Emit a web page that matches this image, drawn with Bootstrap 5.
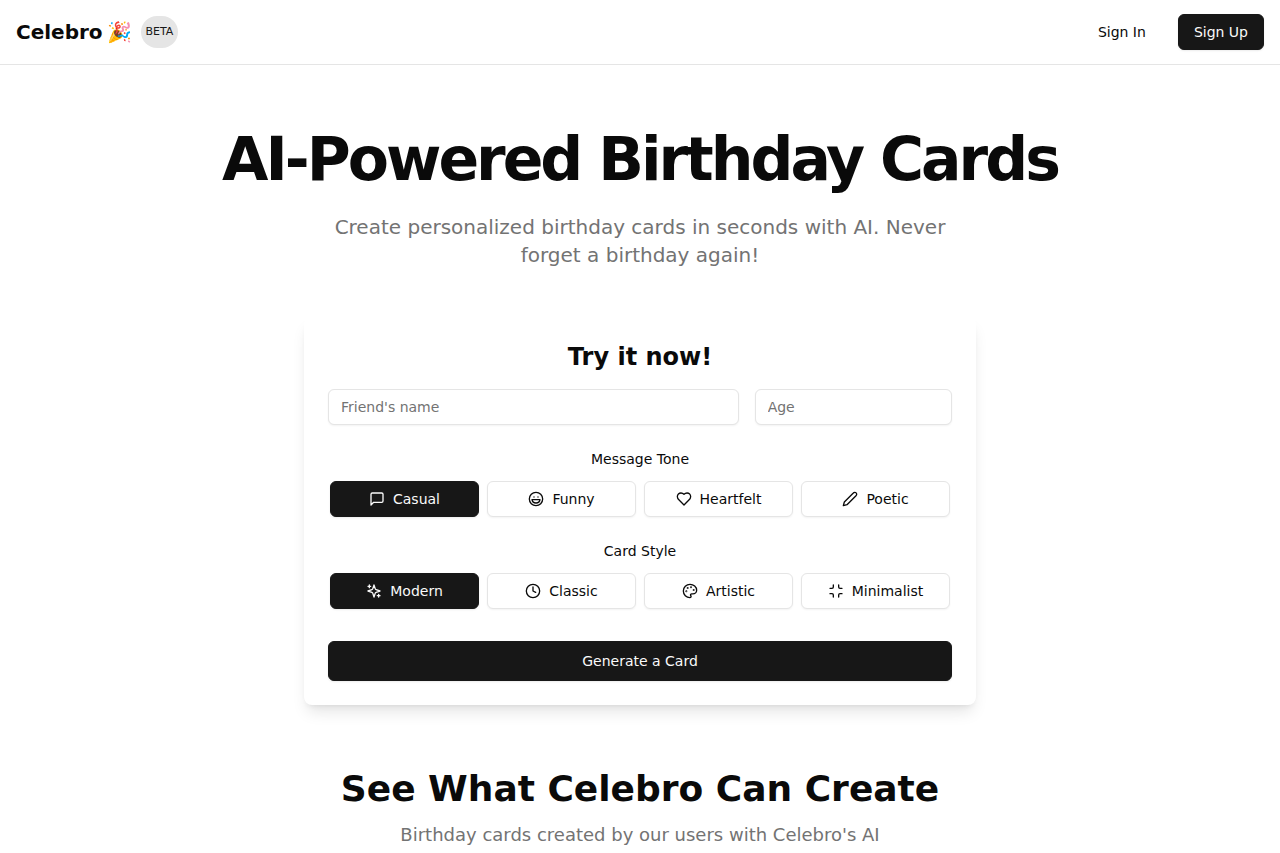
<!DOCTYPE html>
<html lang="en">
<head>
<meta charset="utf-8">
<meta name="viewport" content="width=device-width, initial-scale=1">
<title>Celebro – AI-Powered Birthday Cards</title>
<link href="https://cdn.jsdelivr.net/npm/bootstrap@5.3.0/dist/css/bootstrap.min.css" rel="stylesheet">
<style>
  :root { --ink: #0a0a0a; --solid: #171717; --line: #e5e5e5; --soft: #737373; }
  body { font-family: "DejaVu Sans", "Noto Color Emoji", sans-serif; font-size: 14px; line-height: 20px; color: var(--ink); background: #fff; }
  .site-header { min-height: 65px; border-bottom: 1px solid var(--line); }
  .brand-link { gap: 5px; font-size: 20px; line-height: 28px; font-weight: 700; color: var(--ink); text-decoration: none; }
  .beta-pill { font-size: 11px; line-height: 16px; padding: 8px 5px; border-radius: 16px; background: var(--line); color: var(--solid); }
  .btn { --bs-btn-font-size: 14px; --bs-btn-line-height: 20px; --bs-btn-padding-x: 15px; --bs-btn-padding-y: 7px; --bs-btn-border-radius: 6px; --bs-btn-color: var(--ink); --bs-btn-hover-color: var(--ink); --bs-btn-hover-bg: #f5f5f5; }
  .btn-solid { --bs-btn-color: #fafafa; --bs-btn-bg: var(--solid); --bs-btn-border-color: var(--solid); --bs-btn-hover-color: #fafafa; --bs-btn-hover-bg: #2e2e2e; --bs-btn-active-color: #fafafa; --bs-btn-active-bg: var(--solid); box-shadow: 0 1px 2px rgba(0,0,0,.08); }
  .btn-line { --bs-btn-bg: #fff; --bs-btn-border-color: var(--line); --bs-btn-hover-border-color: var(--line); box-shadow: 0 1px 2px rgba(0,0,0,.05); }
  .btn-tall { --bs-btn-padding-y: 9px; }
  .btn svg { width: 16px; height: 16px; flex: none; fill: none; stroke: currentColor; stroke-width: 2; stroke-linecap: round; stroke-linejoin: round; }
  .hero { padding: 64px 16px; }
  .hero-title { font-size: 60px; line-height: 60px; font-weight: 700; letter-spacing: -3px; margin-bottom: 24px; }
  .hero-lead { max-width: 640px; font-size: 20px; line-height: 28px; color: var(--soft); margin-bottom: 48px; }
  .try-card { max-width: 672px; padding: 24px; border-radius: 8px; background: #fff; box-shadow: 0 10px 15px -3px rgba(0,0,0,.1), 0 4px 6px -4px rgba(0,0,0,.1); }
  .try-title { font-size: 24px; line-height: 32px; font-weight: 700; }
  .form-control { font-size: 14px; line-height: 20px; padding: 7px 12px; border-color: var(--line); border-radius: 6px; box-shadow: 0 1px 2px rgba(0,0,0,.05); }
  .form-control::placeholder { color: var(--soft); }
  .choice-label { margin-bottom: 12px; }
  .choice-row { max-width: 620px; }
  .style-group { margin-bottom: 32px; }
  .show-title { font-size: 36px; line-height: 40px; font-weight: 700; margin-bottom: 12px; }
  .show-lead { font-size: 18px; line-height: 28px; color: var(--soft); }
  @media (max-width: 767px) { .hero-title { font-size: 36px; line-height: 40px; letter-spacing: -2px; } }
</style>
</head>
<body>
<header class="site-header d-flex align-items-center justify-content-between px-3">
  <div class="d-flex align-items-center gap-2">
    <a class="brand-link d-flex" href="#"><span>Celebro</span><span>🎉</span></a>
    <span class="beta-pill">BETA</span>
  </div>
  <nav class="d-flex gap-3" aria-label="Account">
    <a class="btn" href="#">Sign In</a>
    <a class="btn btn-solid" href="#">Sign Up</a>
  </nav>
</header>

<main>
  <section class="hero text-center">
    <h1 class="hero-title">AI-Powered Birthday Cards</h1>
    <p class="hero-lead mx-auto">Create personalized birthday cards in seconds with AI. Never forget a birthday again!</p>

    <form class="try-card mx-auto">
      <h2 class="try-title mb-3">Try it now!</h2>
      <div class="row g-3 mb-4">
        <div class="col-8"><input class="form-control" type="text" placeholder="Friend's name" aria-label="Friend's name"></div>
        <div class="col-4"><input class="form-control" type="text" inputmode="numeric" placeholder="Age" aria-label="Age"></div>
      </div>

      <div class="mb-4" role="group" aria-labelledby="tone-label">
        <div class="choice-label" id="tone-label">Message Tone</div>
        <div class="choice-row mx-auto">
          <div class="row g-2 row-cols-2 row-cols-md-4">
            <div class="col"><button type="button" aria-pressed="true" class="btn btn-solid w-100 d-flex align-items-center justify-content-center gap-2"><svg viewBox="0 0 24 24" aria-hidden="true"><path d="M21 15a2 2 0 0 1-2 2H7l-4 4V5a2 2 0 0 1 2-2h14a2 2 0 0 1 2 2z"/></svg>Casual</button></div>
            <div class="col"><button type="button" aria-pressed="false" class="btn btn-line w-100 d-flex align-items-center justify-content-center gap-2"><svg viewBox="0 0 24 24" aria-hidden="true"><circle cx="12" cy="12" r="10"/><path d="M18 13a6 6 0 0 1-6 5 6 6 0 0 1-6-5h12Z"/><path d="M9 9h.01M15 9h.01"/></svg>Funny</button></div>
            <div class="col"><button type="button" aria-pressed="false" class="btn btn-line w-100 d-flex align-items-center justify-content-center gap-2"><svg viewBox="0 0 24 24" aria-hidden="true"><path d="M19 14c1.49-1.46 3-3.21 3-5.5A5.5 5.5 0 0 0 16.5 3c-1.76 0-3 .5-4.5 2-1.5-1.5-2.74-2-4.5-2A5.5 5.5 0 0 0 2 8.5c0 2.3 1.5 4.05 3 5.5l7 7Z"/></svg>Heartfelt</button></div>
            <div class="col"><button type="button" aria-pressed="false" class="btn btn-line w-100 d-flex align-items-center justify-content-center gap-2"><svg viewBox="0 0 24 24" aria-hidden="true"><path d="M17 3a2.85 2.83 0 1 1 4 4L7.5 20.5 2 22l1.5-5.5Z"/></svg>Poetic</button></div>
          </div>
        </div>
      </div>

      <div class="style-group" role="group" aria-labelledby="style-label">
        <div class="choice-label" id="style-label">Card Style</div>
        <div class="choice-row mx-auto">
          <div class="row g-2 row-cols-2 row-cols-md-4">
            <div class="col"><button type="button" aria-pressed="true" class="btn btn-solid w-100 d-flex align-items-center justify-content-center gap-2"><svg viewBox="0 0 24 24" aria-hidden="true"><path d="m12 3-1.912 5.813a2 2 0 0 1-1.275 1.275L3 12l5.813 1.912a2 2 0 0 1 1.275 1.275L12 21l1.912-5.813a2 2 0 0 1 1.275-1.275L21 12l-5.813-1.912a2 2 0 0 1-1.275-1.275L12 3Z"/><path d="M5 3v4M19 17v4M3 5h4M17 19h4"/></svg>Modern</button></div>
            <div class="col"><button type="button" aria-pressed="false" class="btn btn-line w-100 d-flex align-items-center justify-content-center gap-2"><svg viewBox="0 0 24 24" aria-hidden="true"><circle cx="12" cy="12" r="10"/><path d="M12 6v6l4 2"/></svg>Classic</button></div>
            <div class="col"><button type="button" aria-pressed="false" class="btn btn-line w-100 d-flex align-items-center justify-content-center gap-2"><svg viewBox="0 0 24 24" aria-hidden="true"><circle cx="13.5" cy="6.5" r=".5"/><circle cx="17.5" cy="10.5" r=".5"/><circle cx="8.5" cy="7.5" r=".5"/><circle cx="6.5" cy="12.5" r=".5"/><path d="M12 2C6.5 2 2 6.5 2 12s4.5 10 10 10c.926 0 1.648-.746 1.648-1.688 0-.437-.18-.835-.437-1.125-.29-.289-.438-.652-.438-1.125a1.64 1.64 0 0 1 1.668-1.668h1.996c3.051 0 5.555-2.503 5.555-5.554C21.965 6.012 17.461 2 12 2z"/></svg>Artistic</button></div>
            <div class="col"><button type="button" aria-pressed="false" class="btn btn-line w-100 d-flex align-items-center justify-content-center gap-2"><svg viewBox="0 0 24 24" aria-hidden="true"><path d="M8 3v3a2 2 0 0 1-2 2H3M21 8h-3a2 2 0 0 1-2-2V3M3 16h3a2 2 0 0 1 2 2v3M16 21v-3a2 2 0 0 1 2-2h3"/></svg>Minimalist</button></div>
          </div>
        </div>
      </div>

      <button type="submit" class="btn btn-solid btn-tall w-100">Generate a Card</button>
    </form>
  </section>

  <section class="text-center px-3">
    <h2 class="show-title">See What Celebro Can Create</h2>
    <p class="show-lead mb-0">Birthday cards created by our users with Celebro's AI</p>
  </section>
</main>
<script src="https://cdn.jsdelivr.net/npm/bootstrap@5.3.0/dist/js/bootstrap.bundle.min.js"></script>
</body>
</html>
